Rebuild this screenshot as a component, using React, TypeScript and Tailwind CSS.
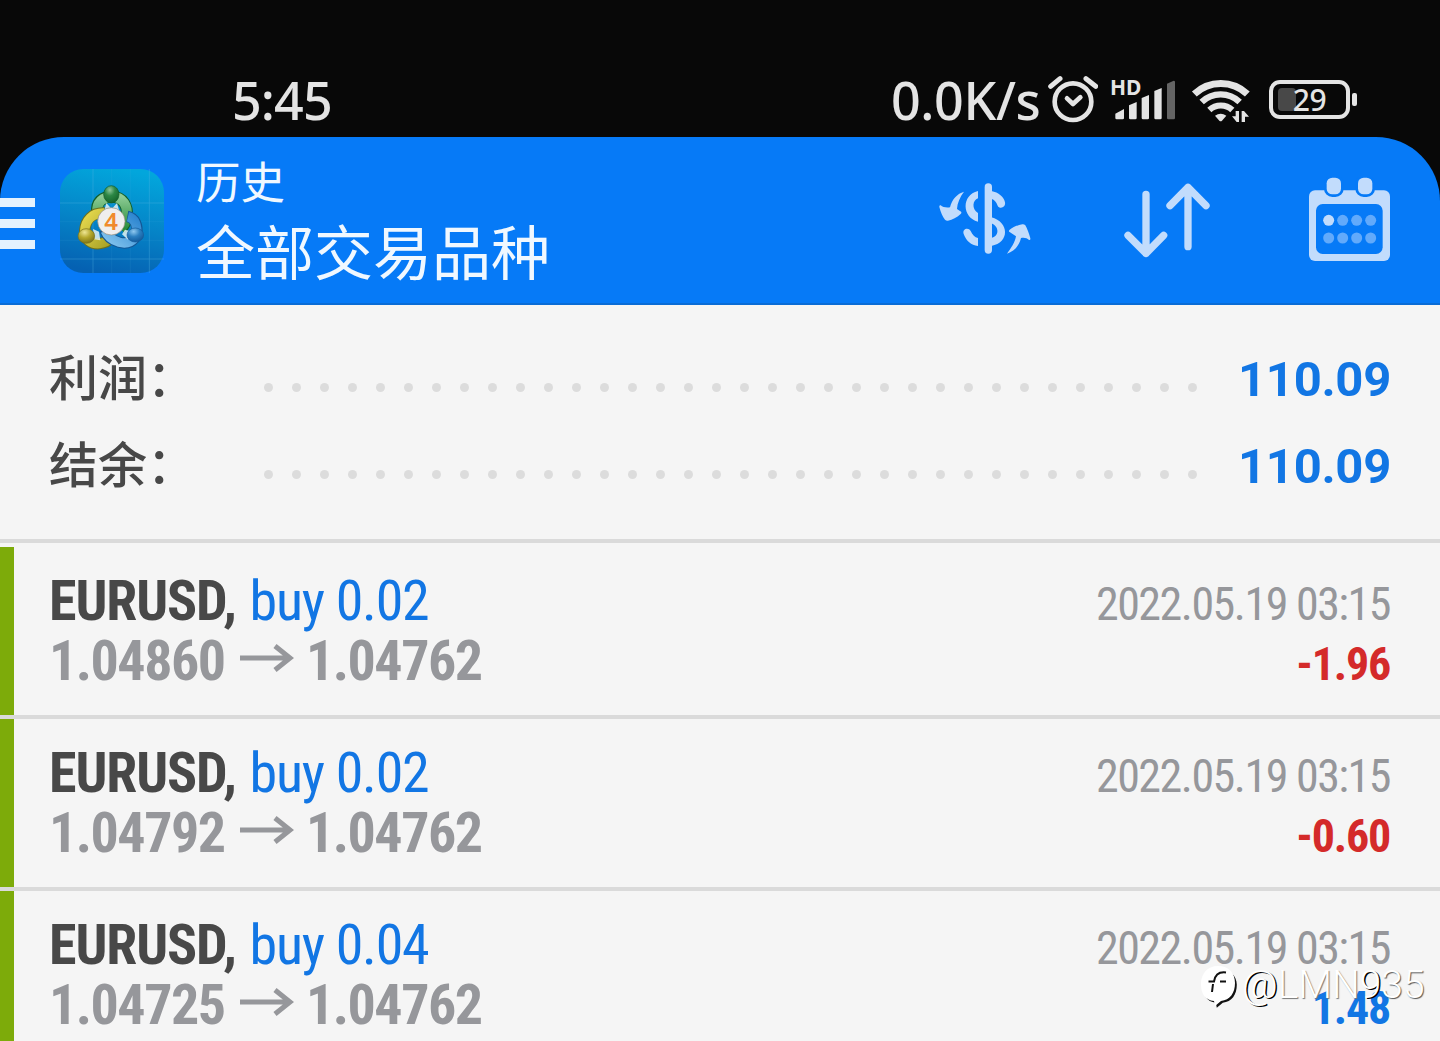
interface Deal {
  volume: string
  open: string
  close: string
  time: string
  profit: string
}

const deals: Deal[] = [
  { volume: '0.02', open: '1.04860', close: '1.04762', time: '2022.05.19 03:15', profit: '-1.96' },
  { volume: '0.02', open: '1.04792', close: '1.04762', time: '2022.05.19 03:15', profit: '-0.60' },
  { volume: '0.04', open: '1.04725', close: '1.04762', time: '2022.05.19 03:15', profit: '1.48' },
]

function AlarmIcon() {
  return (
    <svg width="50" height="48" viewBox="505 45 150 144" fill="none" stroke="#e4e4e4" strokeWidth="14" strokeLinecap="round" strokeLinejoin="round">
      <circle cx="580" cy="125" r="55" />
      <path d="M513 79 541 56M619 56l29 23" strokeWidth="15" />
      <path d="M562 115l18 17 22-20" />
    </svg>
  )
}

function SignalIcon() {
  return (
    <svg width="63" height="43" viewBox="697 55 189 129" fill="#e4e4e4">
      <path d="M707 162 733 148V175q0 4-4 4H711q-4 0-4-4z" />
      <path d="M748 137 771 127V175q0 4-4 4H752q-4 0-4-4z" />
      <path d="M786 115 808 106V175q0 4-4 4H790q-4 0-4-4z" />
      <path d="M824 94 846 85V175q0 4-4 4H828q-4 0-4-4z" />
      <path d="M862 72 882 63q4 0 4 4V175q0 4-4 4H866q-4 0-4-4z" fill="#646464" />
    </svg>
  )
}

function WifiIcon() {
  return (
    <svg width="60" height="45" viewBox="63 53 180 135" fill="none" stroke="#e4e4e4">
      <path d="M73 101A116 116 0 0 1 232 101" strokeWidth="21" />
      <path d="M95 125A82 82 0 0 1 209 125" strokeWidth="19" />
      <path d="M118 149A50 50 0 0 1 187 149" strokeWidth="18" />
      <path d="M135 166q17-12 34 0l-13 15q-4 4-8 0z" fill="#e4e4e4" stroke="none" />
      <path d="M207 152v33h-7l-14-17h11v-16zM215 185v-33h7l15 17h-12v16z" fill="#e4e4e4" stroke="none" />
    </svg>
  )
}

function StatusBar() {
  return (
    <div className="flex h-[137px] shrink-0 items-start bg-[#080808] pt-[70px] font-['Noto_Sans',sans-serif] text-[52px] leading-[60px] font-medium text-[#e4e4e4]">
      <div className="ml-[232px] w-[659px] shrink-0 tracking-[-0.9px]">5:45</div>
      <div className="w-[157px] shrink-0 whitespace-nowrap tracking-[-0.4px]">0.0K/s</div>
      <div className="mt-[5px] shrink-0"><AlarmIcon /></div>
      <div className="relative mt-[8px] ml-[14px] shrink-0">
        <SignalIcon />
        <span className="absolute -top-[1px] left-[-2px] text-[21px] leading-[21px] font-bold">HD</span>
      </div>
      <div className="mt-[8px] ml-[16px] shrink-0"><WifiIcon /></div>
      <div className="relative mt-[10px] ml-[18px] flex h-[39px] w-[81px] shrink-0 items-center justify-center rounded-[11px] border-4 border-[#e4e4e4]">
        <span className="absolute top-[4px] left-[5px] h-[23px] w-[18px] rounded-[4px] bg-[#484848]" />
        <span className="relative text-[30px] leading-[30px] tracking-[-0.5px]">29</span>
      </div>
      <div className="mt-[23px] ml-[2px] h-[13px] w-[5px] shrink-0 rounded-[2px] bg-[#e4e4e4]" />
    </div>
  )
}

function AppLogo() {
  return (
    <svg width="104" height="104" viewBox="2 10 312 312">
      <defs>
        <linearGradient id="tile" x1="0.6" y1="0" x2="0.4" y2="1">
          <stop offset="0" stopColor="#02a6dc" />
          <stop offset="0.5" stopColor="#0585c8" />
          <stop offset="1" stopColor="#0561b2" />
        </linearGradient>
        <linearGradient id="green" x1="0" y1="0" x2="0" y2="1">
          <stop offset="0" stopColor="#8ccb94" />
          <stop offset="1" stopColor="#2b8d3c" />
        </linearGradient>
        <linearGradient id="yellow" x1="0" y1="0" x2="1" y2="1">
          <stop offset="0" stopColor="#e6d94e" />
          <stop offset="1" stopColor="#a8a226" />
        </linearGradient>
        <linearGradient id="blue" x1="1" y1="0" x2="0" y2="1">
          <stop offset="0" stopColor="#2d86d0" />
          <stop offset="1" stopColor="#83c4ee" />
        </linearGradient>
        <radialGradient id="greenHead" cx="0.4" cy="0.25" r="0.75">
          <stop offset="0" stopColor="#8fc79a" />
          <stop offset="0.45" stopColor="#2c8745" />
          <stop offset="1" stopColor="#15652b" />
        </radialGradient>
        <radialGradient id="yellowHead" cx="0.4" cy="0.25" r="0.75">
          <stop offset="0" stopColor="#eee693" />
          <stop offset="0.5" stopColor="#b5a82c" />
          <stop offset="1" stopColor="#7f7517" />
        </radialGradient>
        <radialGradient id="blueHead" cx="0.4" cy="0.25" r="0.75">
          <stop offset="0" stopColor="#8fc8ef" />
          <stop offset="0.5" stopColor="#2b7fc0" />
          <stop offset="1" stopColor="#135b9c" />
        </radialGradient>
      </defs>
      <rect x="2" y="10" width="312" height="312" rx="70" fill="url(#tile)" />
      <path d="M101 10v312M270 10v312M2 112h312M2 280h312" stroke="#58b5e2" strokeWidth="2" opacity="0.5" />
      <path d="M157 10v312M213 10v312M2 168h312M2 224h312" stroke="#58b5e2" strokeWidth="1.5" opacity="0.2" />
      <g fill="none">
        <path d="M114 142C108 110 130 93 157 93 192 93 206 122 202 152 200 170 192 182 184 190" stroke="#125f2a" strokeWidth="36" />
        <path d="M114 140C110 110 132 93 157 93 192 93 206 122 202 152 200 170 192 182 184 188" stroke="url(#green)" strokeWidth="30" />
        <path d="M136 142C98 140 78 164 76 195 75 222 96 236 120 234 138 232 150 224 156 216" stroke="#6d701b" strokeWidth="34" />
        <path d="M134 142C98 141 78 165 76 195 75 222 96 236 120 234 137 232 148 225 154 218" stroke="url(#yellow)" strokeWidth="28" />
        <path d="M204 152C228 156 236 182 232 204 226 228 204 236 180 230 158 224 142 210 136 192" stroke="#145896" strokeWidth="34" />
        <path d="M206 153C228 158 235 182 231 204 225 228 204 236 180 230 160 224 144 211 138 196" stroke="url(#blue)" strokeWidth="28" />
      </g>
      <path d="M141 112l16 18 16-18 6 22h-44zM101 190l18 8 4 26-18-3zM197 192l14 4-5 26-18-16z" fill="#e4f2f4" opacity="0.85" />
      <ellipse cx="156" cy="86" rx="23" ry="26" fill="url(#greenHead)" stroke="#125a28" strokeWidth="2" />
      <ellipse cx="81" cy="211" rx="25" ry="22" fill="url(#yellowHead)" stroke="#77701b" strokeWidth="2" />
      <ellipse cx="228" cy="208" rx="25" ry="21" fill="url(#blueHead)" stroke="#155c9b" strokeWidth="2" />
      <circle cx="156" cy="167" r="41" fill="#efeeee" stroke="#8f8a7a" strokeWidth="2" />
      <text x="155" y="192" textAnchor="middle" fontFamily="Noto Sans" fontWeight="600" fontSize="72" fill="#f08a2c">4</text>
    </svg>
  )
}

function SymbolIcon() {
  return (
    <svg width="92" height="72" viewBox="57 70 276 216" fill="#c2dcfc">
      <rect x="194" y="71" width="22" height="211" rx="11" />
      <path d="M132 96C112 102 96 118 90 143 80 145 68 143 62 137q-5-1-4 5C62 158 68 172 75 180q4 4 9 3C98 180 110 174 122 163q5-5-1-8L111 148C112 130 120 112 132 96z" />
      <path d="M261 282C281 276 297 260 303 235 313 233 321 235 327 241q5 1 4-5C327 220 321 206 316 197q-4-4-9-3C293 196 281 202 269 210q-5 5 1 8L288 230C285 248 273 266 261 282z" />
      <path d="M174 94v22c-16 5-20 32 0 44v26c-48-12-51-80 0-92z" />
      <path d="M174 259v-24c-10-2-16-9-22-21-7-12-26-6-21 9 8 22 22 33 43 36z" />
      <path d="M214 94c22 4 38 18 41 34 3 17-17 21-22 10-5-12-9-18-19-21z" />
      <path d="M214 173c54 14 56 76 0 86v-24c24-4 25-34 0-44z" />
    </svg>
  )
}

function SortIcon() {
  return (
    <svg width="86" height="75" viewBox="612 69 258 225" fill="none" stroke="#c2dcfc" strokeWidth="22" strokeLinecap="round" strokeLinejoin="round">
      <path d="M678 103v177M624 226l54 54 53-54" />
      <path d="M804 260V82M750 137l54-55 54 55" />
    </svg>
  )
}

function CalendarIcon() {
  return (
    <svg width="81" height="84" viewBox="57 51 243 252">
      <rect x="57" y="91" width="243" height="212" rx="18" fill="#c2dcfc" />
      <rect x="78" y="132" width="200" height="150" rx="20" fill="#067af7" />
      <g fill="#c2dcfc" stroke="#067af7" strokeWidth="16" paintOrder="stroke">
        <rect x="110" y="53" width="43" height="50" rx="17" />
        <rect x="204" y="53" width="43" height="50" rx="17" />
      </g>
      <g fill="#62aafb">
        <circle cx="116" cy="181" r="16.5" fill="#c2dcfc" />
        <circle cx="158" cy="181" r="16.5" />
        <circle cx="200" cy="181" r="16.5" />
        <circle cx="242" cy="181" r="16.5" />
        <circle cx="116" cy="234" r="16.5" />
        <circle cx="158" cy="234" r="16.5" />
        <circle cx="200" cy="234" r="16.5" />
        <circle cx="242" cy="234" r="16.5" />
      </g>
    </svg>
  )
}

function Header() {
  return (
    <div className="shrink-0 bg-[#080808]">
      <header className="flex h-[168px] items-start rounded-t-[64px] border-b-2 border-[#0a6cd6] bg-[#067af7]">
        <div className="mt-[61px] flex w-[35px] shrink-0 flex-col gap-[12px]">
          <span className="h-[9px] bg-[#e4f2fe]" />
          <span className="h-[9px] bg-[#e4f2fe]" />
          <span className="h-[9px] bg-[#e4f2fe]" />
        </div>
        <div className="mt-[32px] ml-[25px] shrink-0"><AppLogo /></div>
        <div className="mt-[13px] ml-[32px] w-[743px] shrink-0 font-['Noto_Sans_CJK_SC',sans-serif] text-[#f0f8ff]">
          <div className="text-[44.5px] leading-[60px]">历史</div>
          <div className="text-[59px] leading-[80px]">全部交易品种</div>
        </div>
        <div className="mt-[46px] shrink-0"><SymbolIcon /></div>
        <div className="mt-[46px] ml-[93px] shrink-0"><SortIcon /></div>
        <div className="mt-[40px] ml-[99px] shrink-0"><CalendarIcon /></div>
      </header>
    </div>
  )
}

function SummaryRow({ label, value }: { label: string; value: string }) {
  return (
    <div className="flex h-[87px] items-baseline leading-[87px]">
      <span className="w-[215px] shrink-0 font-['Noto_Sans_CJK_SC',sans-serif] text-[49px] font-medium text-[#484848]">{label}</span>
      <span className="flex w-[933px] shrink-0 -translate-y-[4px] justify-between">
        {Array.from({ length: 34 }, (_, i) => (
          <i key={i} className="h-[9px] w-[9px] rounded-full bg-[#dcdcdc]" />
        ))}
      </span>
      <span className="flex-1 text-right text-[49px] font-bold tracking-[-0.3px] text-[#1276e4]">{value}</span>
    </div>
  )
}

function DealRow({ deal }: { deal: Deal }) {
  const loss = deal.profit.startsWith('-')
  return (
    <div className="h-[168px] shrink-0 border-l-[14px] border-[#7dab0a] pt-[24px] pr-[50px] pl-[35px] font-['Roboto_Condensed',sans-serif] leading-[60px]">
      <div className="flex h-[60px] items-baseline justify-between">
        <div className="text-[56px] tracking-[-1.2px]">
          <span className="font-bold tracking-[-1.1px] text-[#484848]">EURUSD,</span> <span className="ml-[2px] text-[#1276e4]">buy {deal.volume}</span>
        </div>
        <div className="text-[46px] tracking-[-1.5px] text-[#96979b]">{deal.time}</div>
      </div>
      <div className="flex h-[60px] items-baseline">
        <div className="w-[191px] text-[56px] font-bold tracking-[-1.5px] text-[#96979b]">{deal.open}</div>
        <svg className="-translate-y-[8px]" width="54" height="28" viewBox="0 0 54 28" fill="none" stroke="#96979b" strokeWidth="5">
          <path d="M0 14h50M35 2 50 14 35 26" />
        </svg>
        <div className="ml-[12px] text-[56px] font-bold tracking-[-1.5px] text-[#96979b]">{deal.close}</div>
        <div className={`ml-auto text-[46px] font-bold tracking-[-1.2px] ${loss ? 'text-[#d42a2a]' : 'text-[#1276e4]'}`}>{deal.profit}</div>
      </div>
    </div>
  )
}

function Watermark() {
  return (
    <div className="absolute top-[965px] left-[1200px] flex items-start font-['Roboto',sans-serif] text-[39px] leading-[40px] font-light text-white">
      <svg className="mr-[5px]" width="37" height="43" viewBox="0 0 37 43">
        <path d="M18 3C29 3 36 10 36 19c0 10-5 17-14 18l-6 5-1-5C6 36 2 29 2 20 2 10 8 3 18 3z" fill="#111" transform="translate(0.8 0.8)" />
        <path d="M18 1C29 1 35 8 35 18c0 10-5 17-14 18l-6 5-1-5C5 35 1 29 1 19 1 9 7 1 18 1z" fill="#fff" />
        <path d="M26 7.5c-8-1-11 3-12 9H8.500M13 19l-1 8M20 16.500h6" fill="none" stroke="#111" strokeWidth="2" />
      </svg>
      <span className="[text-shadow:1.5px_1px_0_#000]">@</span>
      <span className="[text-shadow:1px_1px_1px_#777]">LMN</span>
      <span className="[text-shadow:1.5px_1px_0_#000]">9</span>
      <span className="[text-shadow:1px_1px_1px_#555]">35</span>
    </div>
  )
}

export default function App() {
  return (
    <div className="relative flex h-[1041px] w-[1440px] flex-col overflow-hidden bg-[#f5f5f5] font-['Roboto',sans-serif]">
      <StatusBar />
      <Header />
      <section className="h-[234px] shrink-0 pt-[26px] pr-[49px] pl-[49px]">
        <SummaryRow label="利润：" value="110.09" />
        <SummaryRow label="结余：" value="110.09" />
      </section>
      <div className="mb-[4px] h-[4px] shrink-0 bg-[#dadada]" />
      {deals.map((deal, i) => (
        <div key={i} className="shrink-0">
          <DealRow deal={deal} />
          <div className="h-[4px] bg-[#dadada]" />
        </div>
      ))}
      <Watermark />
    </div>
  )
}
